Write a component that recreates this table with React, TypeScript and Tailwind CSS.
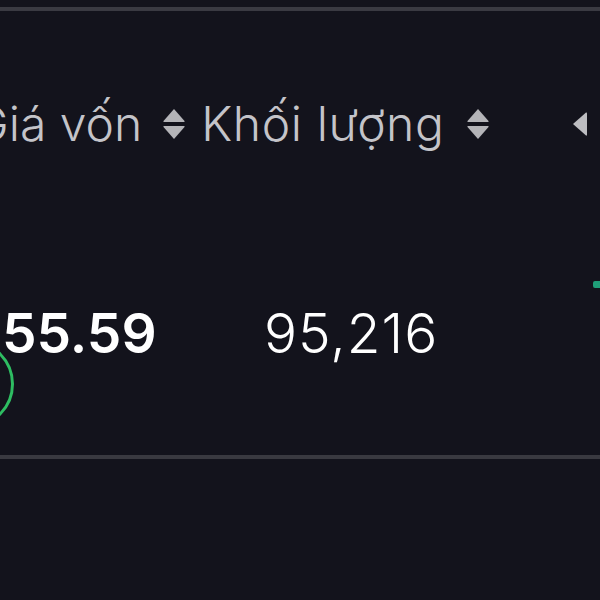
import React from "react";

function SortIcon() {
  return (
    <svg width="24" height="32" viewBox="0 0 24 32" className="shrink-0">
      <path d="M12 1 L22.5 13 Q23 14 22 14 L2 14 Q1 14 1.5 13 Z" fill="#b4b4b8" />
      <path d="M12 31 L22.5 19 Q23 18 22 18 L2 18 Q1 18 1.5 19 Z" fill="#b4b4b8" />
    </svg>
  );
}

export default function App() {
  return (
    <div
      className="w-[600px] h-[600px] bg-[#13131c] overflow-hidden flex flex-col"
      style={{ fontFamily: "Inter, Roboto, 'Noto Sans', sans-serif" }}
    >
      <div className="h-[7px]" />
      <div className="h-[4px] bg-[#3a3a42]" />

      {/* header row */}
      <div className="mt-[88px] flex items-center h-[49px] text-[48px] leading-none font-light text-[#c4c4c9] whitespace-nowrap">
        <span className="ml-[-27px]">Giá vốn</span>
        <span className="ml-[20px]">
          <SortIcon />
        </span>
        <span className="ml-[15px] tracking-[0.6px]">Khối lượng</span>
        <span className="ml-[22px]">
          <SortIcon />
        </span>
        <div className="flex-1" />
        <svg width="16" height="26" viewBox="0 0 16 26" className="mr-[12px] shrink-0">
          <path d="M1 13 L14 1.5 Q15 1 15 2.5 L15 23.5 Q15 25 14 24.5 Z" fill="#bdbdc1" />
        </svg>
      </div>

      {/* data row */}
      <div className="relative mt-[157px] flex items-center h-[56px] text-[55px] leading-none text-white whitespace-nowrap">
        <div className="w-[264px] pl-[2px] shrink-0 font-semibold">55.59</div>
        <div className="font-light tracking-[1px]">95,216</div>
        <div className="absolute left-[-74px] top-[35px] w-[88px] h-[88px] rounded-full border-[3px] border-[#2ebd62]" />
        <div className="absolute right-[-4px] top-[-24px] w-[11px] h-[7px] rounded-[2px] bg-[#1f9e78]" />
      </div>

      <div className="mt-[94px] h-[4px] bg-[#393940]" />
    </div>
  );
}
